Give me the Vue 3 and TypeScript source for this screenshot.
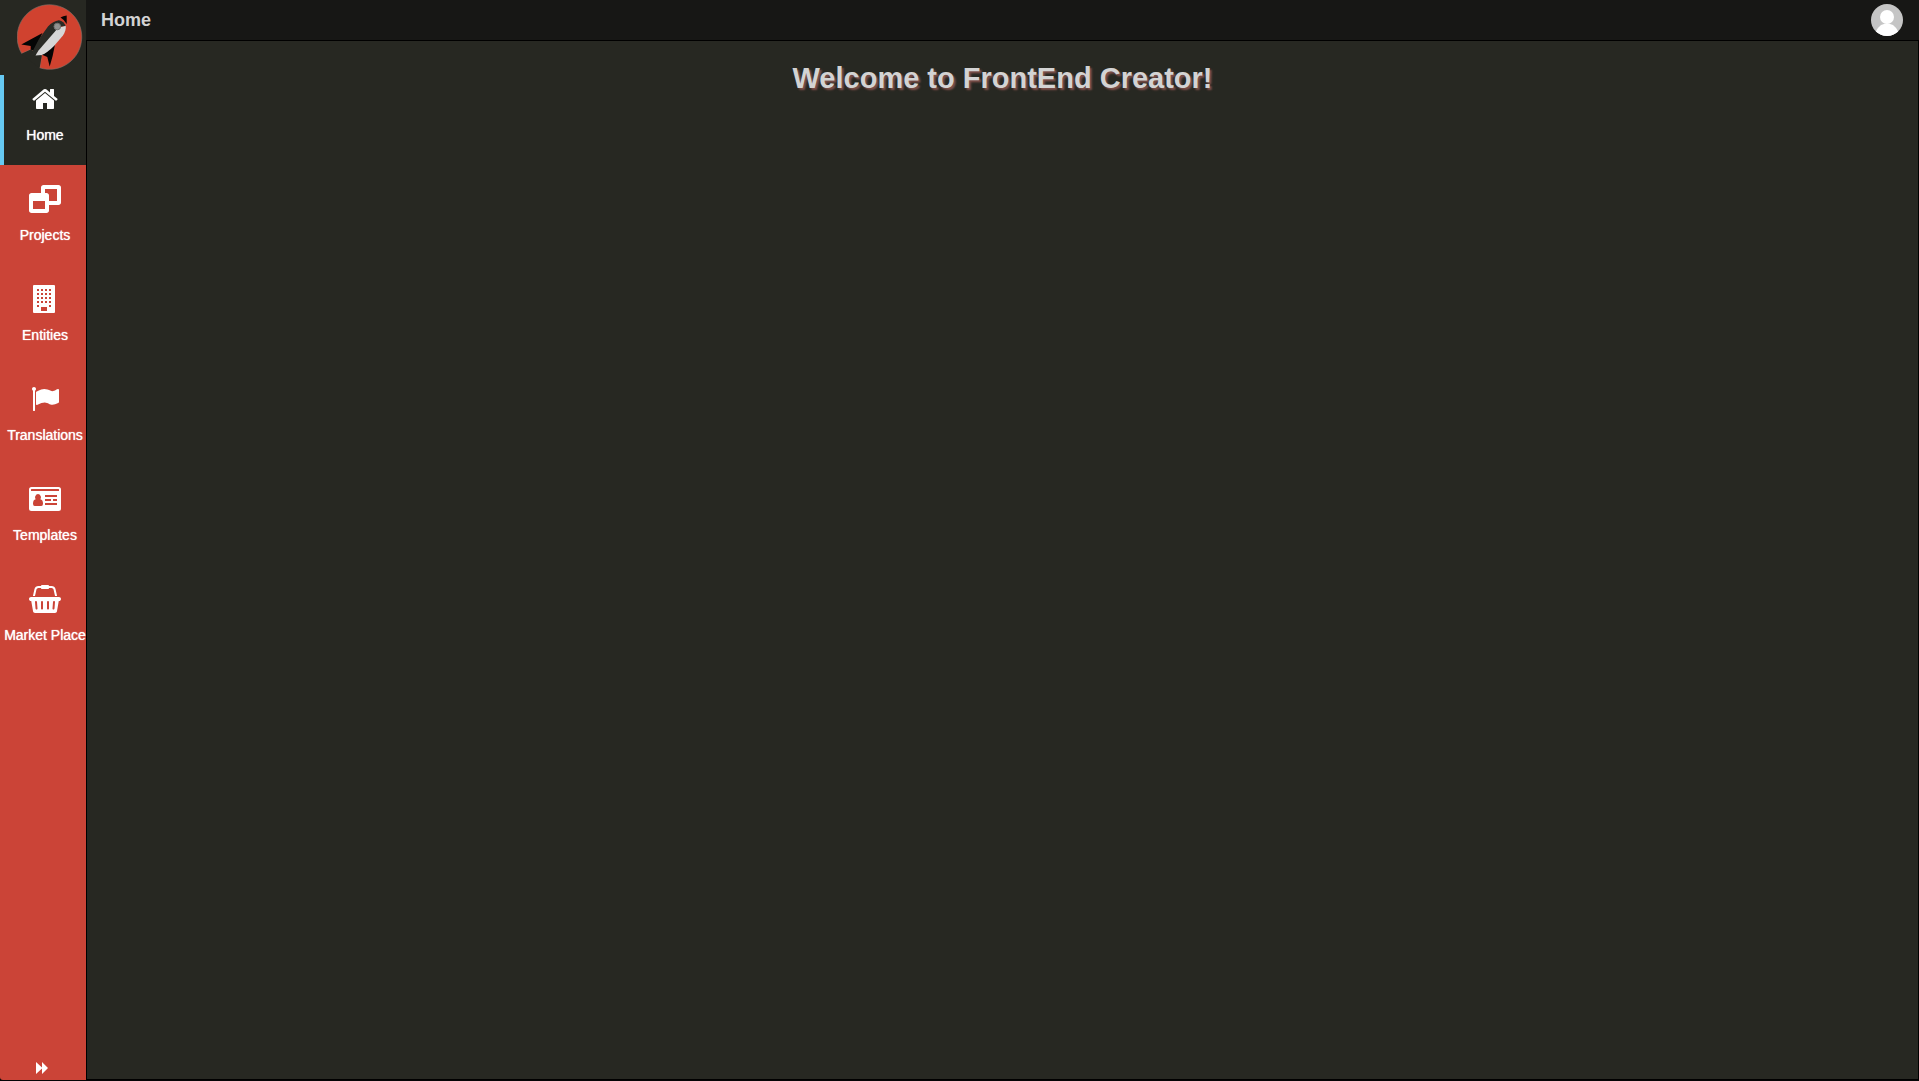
<script setup lang="ts">
interface NavItem {
  id: string
  label: string
  width: number
  viewBox: string
  path: string
}

const items: NavItem[] = [
  {
    id: 'home',
    label: 'Home',
    width: 28,
    viewBox: '0 0 1792 1792',
    path: 'M1472 992v480q0 26-19 45t-45 19h-384v-384h-256v384h-384q-26 0-45-19t-19-45v-480q0-1 .5-3t.5-3l575-474 575 474q1 2 1 6zm223-69l-62 74q-8 9-21 11h-3q-13 0-21-7l-692-577-692 577q-12 8-24 7-13-2-21-11l-62-74q-8-10-7-23.5t11-21.5l719-599q32-26 76-26t76 26l244 204v-195q0-14 9-23t23-9h192q14 0 23 9t9 23v408l219 182q10 8 11 21.5t-7 23.5z',
  },
  {
    id: 'projects',
    label: 'Projects',
    width: 32,
    viewBox: '0 0 2048 1792',
    path: 'M256 1536h768v-512h-768v512zm1024-512h512v-768h-768v256h96q66 0 113 47t47 113v352zm768-864v960q0 66-47 113t-113 47h-608v352q0 66-47 113t-113 47h-960q-66 0-113-47t-47-113v-960q0-66 47-113t113-47h608v-352q0-66 47-113t113-47h960q66 0 113 47t47 113z',
  },
  {
    id: 'entities',
    label: 'Entities',
    width: 24,
    viewBox: '0 0 24 28',
    path: 'M1 0h20q1 0 1 1v26q0 1-1 1h-20q-1 0-1-1v-26q0-1 1-1z' +
      [4, 8, 12, 16, 20].map((y) =>
        (y === 20 ? [4, 16] : [4, 8, 12, 16]).map((x) => `M${x} ${y}h2v2h-2z`).join('')
      ).join('') + 'M8 22h6v4h-6z',
  },
  {
    id: 'translations',
    label: 'Translations',
    width: 28,
    viewBox: '0 0 1792 1792',
    path: 'M320 256q0 72-64 110v1266q0 13-9.5 22.5t-22.5 9.5h-64q-13 0-22.5-9.5t-9.5-22.5v-1266q-64-38-64-110 0-53 37.5-90.5t90.5-37.5 90.5 37.5 37.5 90.5zm1472 64v763q0 25-12.5 38.5t-39.5 27.5q-215 116-369 116-61 0-123.5-22t-108.5-48-115.5-48-142.5-22q-192 0-464 146-17 9-33 9-26 0-45-19t-19-45v-742q0-32 31-55 21-14 79-43 236-120 421-120 107 0 200 29t219 88q38 19 88 19 54 0 117.5-21t110-47 88-47 54.5-21q26 0 45 19t19 45z',
  },
  {
    id: 'templates',
    label: 'Templates',
    width: 32,
    viewBox: '0 0 32 28',
    path: 'M2.500 2h27q2.500 0 2.500 2.500v19q0 2.500-2.500 2.500h-27q-2.500 0-2.500-2.500v-19q0-2.500 2.500-2.500zM2 4.500v1.500h28v-1.500q0-.5-.5-.5h-27q-.5 0-.5.5zM9 9a3 3.300 0 0 0-2.300 5.300q-2.700.4-2.700 4.500 0 2.200 1.700 2.200h6.600q1.700 0 1.700-2.200 0-4.100-2.700-4.500a3 3.300 0 0 0-2.300-5.300zM16 10v2h12v-2zM16 14v2h6v-2zM24 14v2h4v-2zM16 18v2h12v-2z',
  },
  {
    id: 'market',
    label: 'Market Place',
    width: 32,
    viewBox: '0 0 2048 1792',
    path: 'M1920 768q53 0 90.5 37.5t37.5 90.5-37.5 90.5-90.5 37.5h-15l-115 662q-8 46-44 76t-82 30h-1280q-46 0-82-30t-44-76l-115-662h-15q-53 0-90.5-37.5t-37.5-90.5 37.5-90.5 90.5-37.5h1792zm-1435 800q26-2 43.5-22.5t15.5-46.5l-32-416q-2-26-22.5-43.5t-46.5-15.5-43.5 22.5-15.5 46.5l32 416q2 25 20.5 42t43.5 17h5zm411-64v-416q0-26-19-45t-45-19-45 19-19 45v416q0 26 19 45t45 19 45-19 19-45zm384 0v-416q0-26-19-45t-45-19-45 19-19 45v416q0 26 19 45t45 19 45-19 19-45zm352 5l32-416q2-26-15.5-46.5t-43.5-22.5-46.5 15.5-22.5 43.5l-32 416q-2 26 15.5 46.5t43.5 22.5h5q25 0 43.5-17t20.5-42zm-1156-1217l-93 412h-132l101-441q19-88 89-143.5t160-55.5h167q0-26 19-45t45-19h384q26 0 45 19t19 45h167q90 0 160 55.5t89 143.5l101 441h-132l-93-412q-11-44-45.5-72t-79.5-28h-167q0 26-19 45t-45 19h-384q-26 0-45-19t-19-45h-167q-45 0-79.5 28t-45.5 72z',
  },
]

const activeId = 'home'
</script>

<template>
  <div class="app">
    <aside class="sidebar">
      <a class="brand" href="#" aria-label="FrontEnd Creator">
        <svg class="logo" viewBox="0 0 66 66" aria-hidden="true">
          <path d="M4.700 49.500A32.300 32.300 0 1 1 22.700 63.800L24.700 51.500 20 49 14 45.500Z" fill="#d0422f" stroke="#85736b" stroke-width=".6" />
          <path d="M14 45.500 18 50 24.700 51.500 22.500 64 4.500 50Z" fill="#272822" />
          <path d="M4.300 40.500 25.500 29 17 47 13.700 45.500V42Z" fill="#050505" />
          <path d="M38 40.500Q36 52 32.700 62.500L30.300 53 24.500 50.500Z" fill="#050505" />
          <path d="M43.500 13.500Q46 12 49.700 11.500V20Q47 15.500 43.500 13.500Z" fill="#080504" />
          <path d="M42 16.300Q36 17 31 22.500L22 35 16 46.500V48.500L14 50.500 16 51.500 18.500 50 26 45 43 25Z" fill="#292a25" />
          <path d="M48.700 21.500Q49.500 26 46 31.500L37 42Q30 49 24.700 51L18.500 51.500 21.500 46.500 41 24Z" fill="#d6d6d6" />
          <path d="M42 16.300Q47 17.500 48.700 22L44 22.500 39 22Z" fill="#292a25" />
          <circle cx="40.300" cy="22.500" r="3.300" fill="#929290" stroke="#70706d" />
        </svg>
      </a>
      <nav class="nav" aria-label="Main">
        <a
          v-for="item in items"
          :key="item.id"
          href="#"
          class="nav-item"
          :class="{ active: item.id === activeId }"
          :aria-current="item.id === activeId ? 'page' : undefined"
        >
          <svg class="icon" :width="item.width" height="28" :viewBox="item.viewBox" aria-hidden="true">
            <path :d="item.path" fill="currentColor" fill-rule="evenodd" />
          </svg>
          <span class="label">{{ item.label }}</span>
        </a>
      </nav>
      <button class="expand" type="button" aria-label="Expand menu">
        <svg width="12" height="12" viewBox="0 0 12 12" aria-hidden="true">
          <path d="M0 0 6 5.500V0L12 6 6 12V6.500L0 12Z" fill="currentColor" />
        </svg>
      </button>
    </aside>
    <div class="content">
      <header class="topbar">
        <span class="crumb">Home</span>
        <button class="avatar" type="button" aria-label="Account">
          <svg width="32" height="32" viewBox="0 0 32 32" aria-hidden="true">
            <rect width="32" height="32" fill="#c5c5c5" />
            <circle cx="16" cy="13" r="7" fill="#fff" />
            <path d="M4 32Q4 26 10 21Q16 18 22 21Q28 26 28 32Z" fill="#fff" />
          </svg>
        </button>
      </header>
      <main class="panel">
        <h1 class="title">Welcome to FrontEnd Creator!</h1>
      </main>
    </div>
  </div>
</template>

<style>
body {
  margin: 0;
  background: #000;
}
</style>

<style scoped>
.app {
  display: flex;
  box-sizing: border-box;
  min-height: 100vh;
  padding-bottom: 1px;
  background: #050506;
  font-family: "Liberation Sans", Arial, sans-serif;
}

.sidebar {
  display: flex;
  flex-direction: column;
  flex: none;
  width: 86px;
  background: #cb4437;
  border-bottom-left-radius: 3px;
}

.brand {
  display: flex;
  justify-content: flex-end;
  box-sizing: border-box;
  height: 75px;
  padding: 4px 3px 0 0;
  background: #272822;
}

.logo {
  width: 66px;
  height: 66px;
}

.nav {
  display: flex;
  flex-direction: column;
  gap: 10px;
}

.nav-item {
  display: flex;
  flex-direction: column;
  align-items: center;
  gap: 14px;
  box-sizing: border-box;
  height: 90px;
  padding-top: 10px;
  border-left: 4px solid transparent;
  color: #fff;
  text-decoration: none;
}

.nav-item.active {
  background: #272822;
  border-left-color: #66c9f3;
}

.icon {
  flex: none;
}

.label {
  font-size: 14px;
  line-height: 16px;
  white-space: nowrap;
  text-shadow: 0 0 1px currentColor;
}

.expand {
  display: flex;
  justify-content: center;
  margin-top: auto;
  padding: 6px 2px 6px 0;
  border: 0;
  background: none;
  color: #fff;
  cursor: pointer;
}

.content {
  display: flex;
  flex-direction: column;
  flex: 1;
  min-width: 0;
}

.topbar {
  display: flex;
  align-items: center;
  justify-content: space-between;
  height: 40px;
  padding: 0 16px 0 15px;
  background: #171715;
}

.crumb {
  color: #d3d3d3;
  font-size: 18px;
  font-weight: bold;
  line-height: 20px;
}

.avatar {
  display: flex;
  padding: 0;
  border: 0;
  border-radius: 50%;
  overflow: hidden;
  background: none;
  cursor: pointer;
}

.panel {
  flex: 1;
  border: 1px solid #000;
  background: #272822;
}

.title {
  margin: 19px 0 0;
  color: #d3d3d3;
  font-size: 29px;
  font-weight: bold;
  line-height: 36px;
  text-align: center;
  text-shadow: 2px 2px 2px #80504a;
}
</style>
